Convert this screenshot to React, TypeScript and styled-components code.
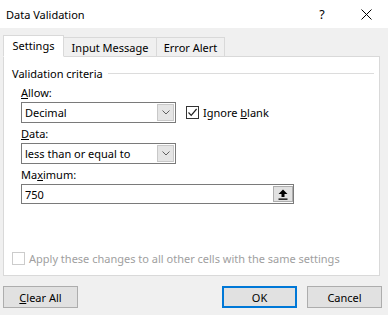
import { createGlobalStyle, styled } from "styled-components";

const Global = createGlobalStyle`
  html, body { margin: 0; padding: 0; background: #f0f0f0; }
  * { box-sizing: border-box; }
`;

const Window = styled.div`
  width: 388px;
  height: 315px;
  background: #f0f0f0;
  font-family: "Noto Sans", "Liberation Sans", sans-serif;
  font-size: 11px;
  color: #000;
  display: flex;
  flex-direction: column;
`;

const TitleBar = styled.div`
  height: 28px;
  background: #fff;
  display: flex;
  align-items: center;
  padding-left: 6px;
  font-size: 11px;
`;

const Title = styled.div`
  flex: 1;
`;

const TitleButton = styled.div`
  width: 44px;
  height: 28px;
  display: flex;
  align-items: center;
  justify-content: center;
  font-size: 12.5px;
`;

const Body = styled.div`
  flex: 1;
  display: flex;
  flex-direction: column;
  padding: 8px 6px 0 3px;
`;

const Tabs = styled.div`
  display: flex;
  align-items: flex-end;
  height: 21px;
  margin-bottom: -1px;
  position: relative;
  z-index: 1;
`;

const Tab = styled.div<{ $active?: boolean; $w: number }>`
  width: ${(p) => p.$w}px;
  height: ${(p) => (p.$active ? 22 : 20)}px;
  border: 1px solid #d9d9d9;
  border-bottom: ${(p) => (p.$active ? "1px solid #fff" : "1px solid #d9d9d9")};
  border-left-width: ${(p) => (p.$active ? 1 : 0)}px;
  background: ${(p) => (p.$active ? "#fff" : "#f0f0f0")};
  display: flex;
  align-items: center;
  justify-content: center;
  padding-bottom: ${(p) => (p.$active ? 1 : 0)}px;
`;

const Panel = styled.div`
  width: 377px;
  height: 220px;
  background: #fff;
  border: 1px solid #d9d9d9;
  display: flex;
  flex-direction: column;
  padding: 8px 5px 9px 8px;
`;

const GroupHeader = styled.div`
  display: flex;
  align-items: center;
  gap: 5px;
  height: 16px;
  &::after {
    content: "";
    flex: 1;
    height: 1px;
    background: #dcdcdc;
  }
`;

const Fields = styled.div`
  padding-left: 9px;
  display: flex;
  flex-direction: column;
`;

const Label = styled.div<{ $top: number }>`
  height: 14px;
  line-height: 14px;
  margin-top: ${(p) => p.$top}px;
  margin-bottom: 2px;
`;

const Row = styled.div`
  display: flex;
  align-items: center;
  gap: 10px;
`;

const Combo = styled.div`
  width: 155px;
  height: 21px;
  border: 1px solid #7a7a7a;
  display: flex;
  background: #fff;
`;

const ComboText = styled.div`
  flex: 1;
  padding-left: 3px;
  display: flex;
  align-items: center;
`;

const ComboButton = styled.div`
  width: 17px;
  margin: 1px;
  background: #e5e5e5;
  border: 1px solid #c8c8c8;
  display: flex;
  align-items: center;
  justify-content: center;
`;

const Check = styled.div<{ $disabled?: boolean }>`
  width: 13px;
  height: 13px;
  border: 1px solid ${(p) => (p.$disabled ? "#cccccc" : "#333")};
  background: #fff;
  display: flex;
  align-items: center;
  justify-content: center;
`;

const CheckRow = styled.div<{ $disabled?: boolean }>`
  display: flex;
  align-items: center;
  gap: 4px;
  color: ${(p) => (p.$disabled ? "#a0a0a0" : "#000")};
  margin-top: ${(p) => (p.$disabled ? "auto" : "0")};
`;

const TextBox = styled.div`
  width: 273px;
  height: 20px;
  border: 1px solid #7a7a7a;
  display: flex;
  background: #fff;
`;

const RefButton = styled.div`
  width: 20px;
  margin: 1px 0 1px 0;
  background: #e1e1e1;
  border: 1px solid #adadad;
  display: flex;
  align-items: center;
  justify-content: center;
`;

const Footer = styled.div`
  display: flex;
  align-items: center;
  margin-top: 10px;
  gap: 10px;
`;

const Button = styled.div<{ $default?: boolean }>`
  width: 75px;
  height: 22px;
  background: #e1e1e1;
  border: ${(p) => (p.$default ? "2px solid #0078d7" : "1px solid #adadad")};
  display: flex;
  align-items: center;
  justify-content: center;
  &:first-child {
    margin-right: auto;
  }
`;

const Chevron = () => (
  <svg width="8" height="5" viewBox="0 0 8 5">
    <path d="M0.5 0.5 L4 4 L7.5 0.5" fill="none" stroke="#606060" strokeWidth="1" />
  </svg>
);

const Tick = () => (
  <svg width="11" height="11" viewBox="0 0 11 11">
    <path d="M1.5 5.5 L4.2 8.3 L9.6 2" fill="none" stroke="#222" strokeWidth="1.2" />
  </svg>
);

export default function App() {
  return (
    <Window>
      <Global />
      <TitleBar>
        <Title>Data Validation</Title>
        <TitleButton>?</TitleButton>
        <TitleButton>
          <svg width="11" height="11" viewBox="0 0 11 11">
            <path d="M0.5 0.5 L10.5 10.5 M10.5 0.5 L0.5 10.5" stroke="#000" strokeWidth="1" />
          </svg>
        </TitleButton>
      </TitleBar>
      <Body>
        <Tabs>
          <Tab $active $w={61}>Settings</Tab>
          <Tab $w={93}>Input Message</Tab>
          <Tab $w={68}>Error Alert</Tab>
        </Tabs>
        <Panel>
          <GroupHeader>Validation criteria</GroupHeader>
          <Fields>
            <Label $top={5}>
              <u>A</u>llow:
            </Label>
            <Row>
              <Combo>
                <ComboText>Decimal</ComboText>
                <ComboButton>
                  <Chevron />
                </ComboButton>
              </Combo>
              <CheckRow>
                <Check>
                  <Tick />
                </Check>
                <span>
                  Ignore <u>b</u>lank
                </span>
              </CheckRow>
            </Row>
            <Label $top={4}>
              <u>D</u>ata:
            </Label>
            <Combo>
              <ComboText>less than or equal to</ComboText>
              <ComboButton>
                <Chevron />
              </ComboButton>
            </Combo>
            <Label $top={4}>
              Ma<u>x</u>imum:
            </Label>
            <TextBox>
              <ComboText>750</ComboText>
              <RefButton>
                <svg width="10" height="11" viewBox="0 0 10 11">
                  <path d="M5 0.5 L9.5 5 H6.5 V8 H3.5 V5 H0.5 Z" fill="#000" />
                  <rect x="0.5" y="9.5" width="9" height="1.3" fill="#000" />
                </svg>
              </RefButton>
            </TextBox>
          </Fields>
          <CheckRow $disabled>
            <Check $disabled />
            <span>Apply these changes to all other cells with the same settings</span>
          </CheckRow>
        </Panel>
        <Footer>
          <Button>
            <span>
              <u>C</u>lear All
            </span>
          </Button>
          <Button $default>OK</Button>
          <Button>Cancel</Button>
        </Footer>
      </Body>
    </Window>
  );
}
